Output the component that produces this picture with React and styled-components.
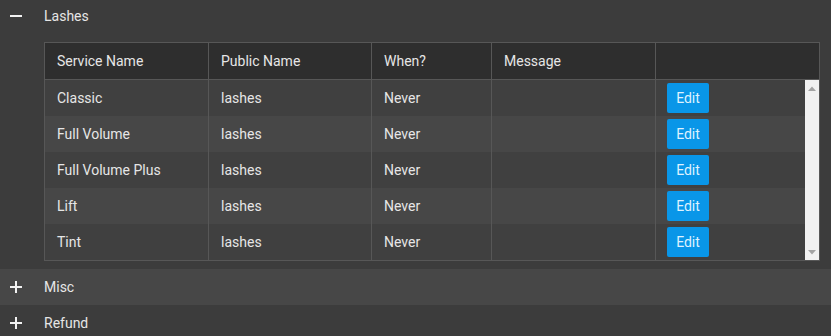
import React from "react";
import styled, { createGlobalStyle } from "styled-components";

const Global = createGlobalStyle`
  html, body { margin: 0; padding: 0; background: #3c3c3c; }
  body { font-family: Roboto, "Liberation Sans", sans-serif; font-size: 14px; color: #e6e6e6; overflow: hidden; }
`;

const Page = styled.div`
  width: 831px;
  height: 336px;
  overflow: hidden;
  background: #3c3c3c;
`;

const Group = styled.section`
  background: ${(p) => (p.$alt ? "#474747" : "#3c3c3c")};
`;

const GroupHeader = styled.div`
  height: ${(p) => (p.$compact ? "32px" : "36px")};
  display: flex;
  align-items: center;
  cursor: pointer;
`;

const Toggle = styled.span`
  width: 44px;
  padding-left: 10px;
  box-sizing: border-box;
  display: flex;
  align-items: center;
`;

const GroupTitle = styled.span`
  color: #e6e6e6;
  font-size: 14px;
`;

const Panel = styled.div`
  padding: 10px 11px 8px 44px;
`;

const Table = styled.div`
  border: 1px solid #575757;
  background: #3c3c3c;
`;

const cols = "164px 163px 120px 164px 1fr";

const HeadRow = styled.div`
  display: grid;
  grid-template-columns: ${cols};
  height: 36px;
  background: #2e2e2e;
  border-bottom: 1px solid #575757;
`;

const Body = styled.div`
  display: flex;
  height: 180px;
`;

const RowList = styled.div`
  flex: 1;
  overflow: hidden;
`;

const ScrollRail = styled.div`
  width: 14px;
  background: #f1f1f1;
  display: flex;
  flex-direction: column;
  justify-content: space-between;
  align-items: center;
  padding: 6px 0 5px;
`;

const Row = styled.div`
  display: grid;
  grid-template-columns: ${cols};
  height: 36px;
  background: ${(p) => (p.$even ? "#474747" : "#404040")};
`;

const Cell = styled.div`
  display: flex;
  align-items: center;
  padding: 0 12px 0 ${(p) => (p.$last ? "11px" : "12px")};
  border-right: ${(p) => (p.$last ? "none" : "1px solid #575757")};
  color: #e6e6e6;
  font-size: 14px;
  white-space: nowrap;
  overflow: hidden;
`;

const EditButton = styled.button`
  width: 42px;
  height: 30px;
  border: none;
  border-radius: 2px;
  background: #0996e8;
  color: #dff2ff;
  font-family: Roboto, "Liberation Sans", sans-serif;
  font-size: 14px;
  padding: 0;
  cursor: pointer;
`;

const Icon = ({ plus }) => (
  <svg width="12" height="12" viewBox="0 0 12 12">
    <rect x="0" y="5" width="12" height="2" fill="#f2f2f2" />
    {plus && <rect x="5" y="0" width="2" height="12" fill="#f2f2f2" />}
  </svg>
);

const Arrow = ({ down }) => (
  <svg width="8" height="5" viewBox="0 0 8 5">
    <polygon points={down ? "0,0 8,0 4,4.5" : "4,0.5 8,5 0,5"} fill="#a3a3a3" />
  </svg>
);

const services = [
  { name: "Classic", pub: "lashes", when: "Never", msg: "" },
  { name: "Full Volume", pub: "lashes", when: "Never", msg: "" },
  { name: "Full Volume Plus", pub: "lashes", when: "Never", msg: "" },
  { name: "Lift", pub: "lashes", when: "Never", msg: "" },
  { name: "Tint", pub: "lashes", when: "Never", msg: "" },
];

export default function App() {
  return (
    <Page>
      <Global />
      <Group>
        <GroupHeader $compact>
          <Toggle><Icon /></Toggle>
          <GroupTitle>Lashes</GroupTitle>
        </GroupHeader>
        <Panel>
          <Table>
            <HeadRow>
              <Cell>Service Name</Cell>
              <Cell>Public Name</Cell>
              <Cell>When?</Cell>
              <Cell>Message</Cell>
              <Cell $last />
            </HeadRow>
            <Body>
              <RowList>
                {services.map((s, i) => (
                  <Row key={s.name} $even={i % 2 === 1}>
                    <Cell>{s.name}</Cell>
                    <Cell>{s.pub}</Cell>
                    <Cell>{s.when}</Cell>
                    <Cell>{s.msg}</Cell>
                    <Cell $last>
                      <EditButton>Edit</EditButton>
                    </Cell>
                  </Row>
                ))}
              </RowList>
              <ScrollRail>
                <Arrow />
                <Arrow down />
              </ScrollRail>
            </Body>
          </Table>
        </Panel>
      </Group>
      <Group $alt>
        <GroupHeader>
          <Toggle><Icon plus /></Toggle>
          <GroupTitle>Misc</GroupTitle>
        </GroupHeader>
      </Group>
      <Group>
        <GroupHeader>
          <Toggle><Icon plus /></Toggle>
          <GroupTitle>Refund</GroupTitle>
        </GroupHeader>
      </Group>
    </Page>
  );
}
